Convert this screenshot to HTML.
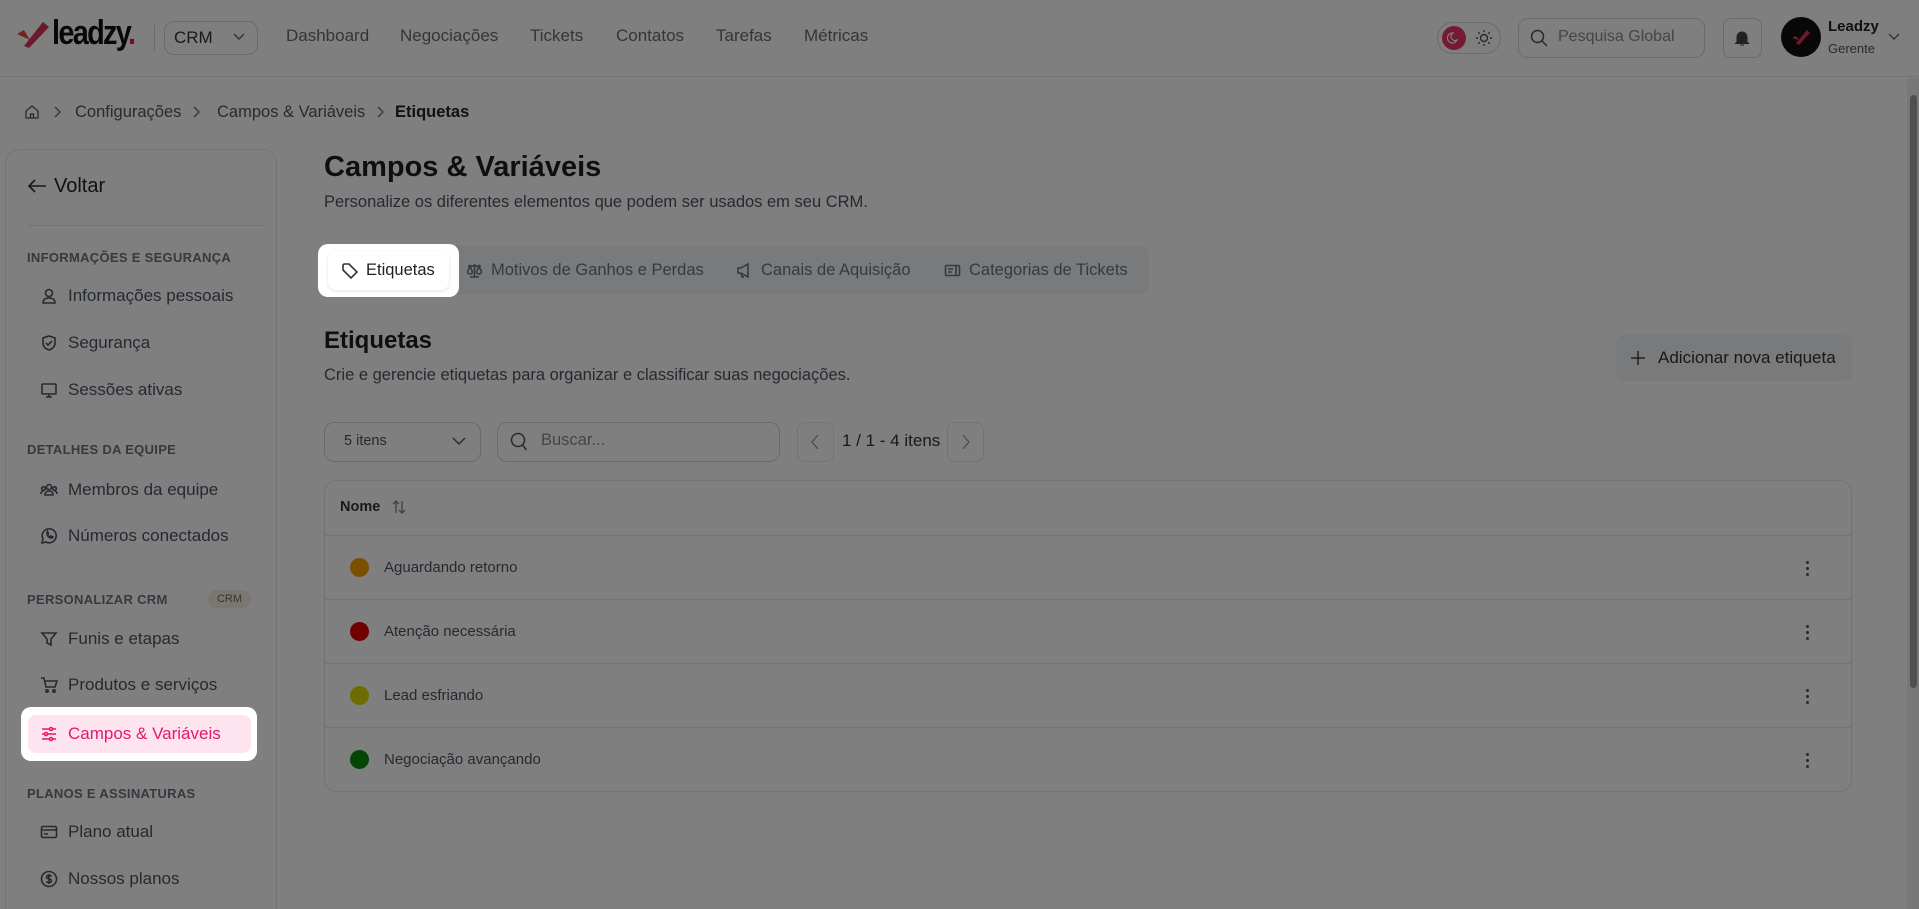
<!DOCTYPE html>
<html style="overflow:hidden;height:909px"><head><meta charset="utf-8"><style>
*{box-sizing:border-box;margin:0;padding:0}
body{width:1919px;height:909px;overflow:hidden;background:#fff;font-family:"Liberation Sans",sans-serif;color:#111;position:relative}
.abs{position:absolute}
.nav{top:26px;font-size:17px;color:#6b6b6b}
.sb-h{left:27px;font-size:13px;font-weight:bold;color:#6b7280;letter-spacing:.3px}
.sb-i{left:40px;font-size:17px;color:#4b5563;display:flex;align-items:center;gap:10px;height:24px}
.sb-i svg{width:18px;height:18px;stroke:#4b5563;fill:none;stroke-width:1.6}
.tab{top:261px;font-size:16.5px;color:#6b7280;display:flex;align-items:center;gap:8px}
.tab svg{width:17px;height:17px;stroke:#6b7280;fill:none;stroke-width:1.6}
.row{left:324px;width:1528px;height:64px;border-top:1px solid #e5e7eb}
.dot{position:absolute;left:350px;width:19px;height:19px;border-radius:50%}
.rt{position:absolute;left:384px;font-size:15px;color:#4b5563}
.keb{position:absolute;left:1806px;width:4px;font-size:0}
.keb i{display:block;width:3px;height:3px;border-radius:50%;background:#555;margin:0 0 3px}
#ov{position:absolute;left:0;top:0;width:1919px;height:909px;background:rgba(0,0,0,.5);z-index:5}
.spot{z-index:10}
</style></head><body>
<!-- header -->
<div class="abs" style="left:0;top:0;width:1919px;height:77px;border-bottom:1px solid #e5e7eb"></div>
<svg class="abs" style="left:15px;top:20px" width="36" height="28" viewBox="0 0 36 28"><path d="M2 14 L9 10 L15 20 Z" fill="#e04a3a"/><path d="M9 26 L28 2 L34 7 L14 28 Z" fill="#d9305a"/></svg>
<div class="abs" style="left:52px;top:14px;font-size:34px;font-weight:bold;letter-spacing:-2px;transform:scaleX(.85);transform-origin:left;color:#111">leadzy<span style="color:#e01e5a">.</span></div>
<div class="abs" style="left:154px;top:25px;width:1px;height:26px;background:#d1d5db"></div>
<div class="abs" style="left:164px;top:21px;width:94px;height:34px;border:1px solid #d1d5db;border-radius:10px"></div>
<div class="abs" style="left:174px;top:28px;font-size:17px;color:#333">CRM</div>
<svg class="abs" style="left:233px;top:32px" width="12" height="10" viewBox="0 0 12 10"><path d="M1 2 L6 7 L11 2" stroke="#666" fill="none" stroke-width="1.4"/></svg>
<div class="abs nav" style="left:286px">Dashboard</div>
<div class="abs nav" style="left:400px">Negociações</div>
<div class="abs nav" style="left:530px">Tickets</div>
<div class="abs nav" style="left:616px">Contatos</div>
<div class="abs nav" style="left:716px">Tarefas</div>
<div class="abs nav" style="left:804px">Métricas</div>
<div class="abs" style="left:1437px;top:22px;width:64px;height:32px;border:1px solid #d1d5db;border-radius:16px"></div>
<div class="abs" style="left:1442px;top:26px;width:24px;height:24px;border-radius:50%;background:#e8346a"></div>
<svg class="abs" style="left:1447px;top:31px" width="14" height="14" viewBox="0 0 14 14"><path d="M10 9 A5 5 0 1 1 6 2 A4 4 0 0 0 10 9Z" stroke="#fff" fill="none" stroke-width="1.2"/></svg>
<svg class="abs" style="left:1475px;top:29px" width="18" height="18" viewBox="0 0 18 18" stroke="#555" stroke-width="1.4" fill="none"><circle cx="9" cy="9" r="3.5"/><path d="M9 1v2M9 15v2M1 9h2M15 9h2M3.3 3.3l1.4 1.4M13.3 13.3l1.4 1.4M3.3 14.7l1.4-1.4M13.3 4.7l1.4-1.4"/></svg>
<div class="abs" style="left:1518px;top:18px;width:187px;height:40px;border:1px solid #d1d5db;border-radius:10px"></div>
<svg class="abs" style="left:1530px;top:29px" width="18" height="18" viewBox="0 0 18 18"><circle cx="7.5" cy="7.5" r="6" stroke="#555" fill="none" stroke-width="1.5"/><path d="M12 12l5 5" stroke="#555" stroke-width="1.5"/></svg>
<div class="abs" style="left:1558px;top:28px;font-size:16px;color:#8a8a8a">Pesquisa Global</div>
<div class="abs" style="left:1723px;top:18px;width:39px;height:40px;border:1px solid #d1d5db;border-radius:8px"></div>
<svg class="abs" style="left:1734px;top:29px" width="16" height="18" viewBox="0 0 16 18"><path d="M3 13V8a5 5 0 0 1 10 0v5l1.5 1.5h-13Z M6 16h4" fill="#444" stroke="#444"/></svg>
<div class="abs" style="left:1781px;top:17px;width:40px;height:40px;border-radius:50%;background:#111"></div>
<svg class="abs" style="left:1791px;top:29px" width="20" height="16" viewBox="0 0 20 16"><path d="M1 9l4-2 3 4z" fill="#e04a3a"/><path d="M5 14L16 1l3 3L8 16z" fill="#d9305a"/></svg>
<div class="abs" style="left:1828px;top:18px;font-size:15px;font-weight:bold;color:#222">Leadzy</div>
<div class="abs" style="left:1828px;top:41px;font-size:13px;color:#555">Gerente</div>
<svg class="abs" style="left:1888px;top:32px" width="12" height="10" viewBox="0 0 12 10"><path d="M1 2 L6 7 L11 2" stroke="#666" fill="none" stroke-width="1.4"/></svg>
<!-- scrollbar -->
<div class="abs" style="left:1907px;top:78px;width:12px;height:831px;background:#f1f1f1"></div>
<div class="abs" style="left:1910px;top:95px;width:7px;height:593px;background:#a0a0a0;border-radius:4px"></div>
<!-- breadcrumb -->
<svg class="abs" style="left:24px;top:104px" width="16" height="16" viewBox="0 0 16 16"><path d="M2 7L8 2l6 5v7H2Z M6.5 14v-4h3v4" stroke="#555" fill="none" stroke-width="1.3"/></svg>
<svg class="abs" style="left:53px;top:106px" width="8" height="12" viewBox="0 0 8 12"><path d="M2 1l5 5-5 5" stroke="#666" fill="none" stroke-width="1.3"/></svg>
<div class="abs" style="left:75px;top:103px;font-size:16.5px;color:#555">Configurações</div>
<svg class="abs" style="left:192px;top:106px" width="8" height="12" viewBox="0 0 8 12"><path d="M2 1l5 5-5 5" stroke="#666" fill="none" stroke-width="1.3"/></svg>
<div class="abs" style="left:217px;top:103px;font-size:16.5px;color:#555">Campos &amp; Variáveis</div>
<svg class="abs" style="left:376px;top:106px" width="8" height="12" viewBox="0 0 8 12"><path d="M2 1l5 5-5 5" stroke="#666" fill="none" stroke-width="1.3"/></svg>
<div class="abs" style="left:395px;top:103px;font-size:16.5px;color:#222;font-weight:bold">Etiquetas</div>
<!-- sidebar -->
<div class="abs" style="left:5px;top:149px;width:272px;height:760px;border:1px solid #e5e7eb;border-bottom:none;border-radius:14px 14px 0 0"></div>
<svg class="abs" style="left:27px;top:178px" width="20" height="16" viewBox="0 0 20 16"><path d="M19 8H2M8 2L2 8l6 6" stroke="#333" fill="none" stroke-width="1.6"/></svg>
<div class="abs" style="left:54px;top:175px;font-size:20px;color:#222">Voltar</div>
<div class="abs" style="left:27px;top:225px;width:237px;height:1px;background:#e5e7eb"></div>
<div class="abs sb-h" style="top:250px">INFORMAÇÕES E SEGURANÇA</div>
<div class="abs sb-i" style="top:284px"><svg viewBox="0 0 18 18"><circle cx="9" cy="6" r="3.5"/><path d="M3 16c0-4 3-5 6-5s6 1 6 5z"/></svg>Informações pessoais</div>
<div class="abs sb-i" style="top:331px"><svg viewBox="0 0 18 18"><path d="M9 2l6 2v5c0 4-3 6-6 7-3-1-6-3-6-7V4z"/><path d="M6 9l2 2 4-4"/></svg>Segurança</div>
<div class="abs sb-i" style="top:378px"><svg viewBox="0 0 18 18"><rect x="2" y="3" width="14" height="10" rx="1"/><path d="M6 16h6M9 13v3"/></svg>Sessões ativas</div>
<div class="abs sb-h" style="top:442px">DETALHES DA EQUIPE</div>
<div class="abs sb-i" style="top:478px"><svg viewBox="0 0 18 18"><circle cx="9" cy="6" r="2.5"/><circle cx="3.5" cy="7.5" r="1.8"/><circle cx="14.5" cy="7.5" r="1.8"/><path d="M5 14c0-3 2-4 4-4s4 1 4 4zM1 13c0-2 1-3 2.5-3M17 13c0-2-1-3-2.5-3"/></svg>Membros da equipe</div>
<div class="abs sb-i" style="top:524px"><svg viewBox="0 0 18 18"><path d="M2 16l1-4a7 7 0 1 1 3 3z"/><path d="M7 6c0 3 2 5 5 5l1-1-2-1-1 1c-1-.5-2-1.5-2.5-2.5l1-1-1-2z"/></svg>Números conectados</div>
<div class="abs sb-h" style="top:592px">PERSONALIZAR CRM</div>
<div class="abs" style="left:208px;top:590px;width:43px;height:18px;border-radius:9px;background:#f5ece0;font-size:11px;color:#6b6b6b;text-align:center;line-height:18px">CRM</div>
<div class="abs sb-i" style="top:627px"><svg viewBox="0 0 18 18"><path d="M2 3h14l-5 6v6l-4 -2V9z"/></svg>Funis e etapas</div>
<div class="abs sb-i" style="top:673px"><svg viewBox="0 0 18 18"><path d="M1 2h3l2 9h9l2-6H5"/><circle cx="7" cy="15" r="1.2"/><circle cx="14" cy="15" r="1.2"/></svg>Produtos e serviços</div>
<div class="abs sb-h" style="top:786px">PLANOS E ASSINATURAS</div>
<div class="abs sb-i" style="top:820px"><svg viewBox="0 0 18 18"><rect x="1.5" y="3.5" width="15" height="11" rx="1.5"/><path d="M1.5 7h15M4 11h4"/></svg>Plano atual</div>
<div class="abs sb-i" style="top:867px"><svg viewBox="0 0 18 18"><circle cx="9" cy="9" r="7.5"/><path d="M11.5 6.5c-.5-1-1.5-1.2-2.5-1.2-1.5 0-2.5.8-2.5 1.8 0 2.5 5 1.2 5 3.7 0 1-1 1.8-2.5 1.8-1 0-2-.3-2.5-1.2M9 4v10"/></svg>Nossos planos</div>
<!-- main -->
<div class="abs" style="left:324px;top:151px;font-size:29px;font-weight:bold;color:#1f1f1f">Campos &amp; Variáveis</div>
<div class="abs" style="left:324px;top:193px;font-size:16.5px;color:#4b5563">Personalize os diferentes elementos que podem ser usados em seu CRM.</div>
<div class="abs" style="left:319px;top:246px;width:830px;height:49px;background:#f3f4f6;border-radius:10px"></div>
<div class="abs tab" style="left:466px"><svg viewBox="0 0 17 17"><path d="M8.5 2v13M4 15h9M2 4h13M4 4l-2.5 6a2.5 2 0 0 0 5 0zM13 4l-2.5 6a2.5 2 0 0 0 5 0z"/></svg>Motivos de Ganhos e Perdas</div>
<div class="abs tab" style="left:736px"><svg viewBox="0 0 17 17"><path d="M2 7v4h3l7 4V2L5 6H2zM5 11l1 4h2"/></svg>Canais de Aquisição</div>
<div class="abs tab" style="left:944px"><svg viewBox="0 0 17 17"><rect x="1.5" y="3.5" width="14" height="10" rx="1"/><path d="M4 7h5M4 10h4M12 4v9"/></svg>Categorias de Tickets</div>
<div class="abs" style="left:324px;top:327px;font-size:24px;font-weight:bold;color:#1f1f1f">Etiquetas</div>
<div class="abs" style="left:324px;top:366px;font-size:16.5px;color:#4b5563">Crie e gerencie etiquetas para organizar e classificar suas negociações.</div>
<div class="abs" style="left:1616px;top:335px;width:236px;height:46px;background:#f3f4f6;border-radius:8px"></div>
<svg class="abs" style="left:1630px;top:350px" width="16" height="16" viewBox="0 0 16 16"><path d="M8 1v14M1 8h14" stroke="#444" stroke-width="1.5"/></svg>
<div class="abs" style="left:1658px;top:348px;font-size:17px;color:#333">Adicionar nova etiqueta</div>
<div class="abs" style="left:324px;top:422px;width:157px;height:40px;border:1px solid #d1d5db;border-radius:10px"></div>
<div class="abs" style="left:344px;top:433px;font-size:14.5px;color:#4b5563">5 itens</div>
<svg class="abs" style="left:452px;top:436px" width="14" height="10" viewBox="0 0 14 10"><path d="M1 2l6 6 6-6" stroke="#555" fill="none" stroke-width="1.4"/></svg>
<div class="abs" style="left:497px;top:422px;width:283px;height:40px;border:1px solid #d1d5db;border-radius:10px"></div>
<svg class="abs" style="left:510px;top:432px" width="18" height="20" viewBox="0 0 18 20"><circle cx="8" cy="8" r="6.5" stroke="#555" fill="none" stroke-width="1.5"/><path d="M12.5 13l4 5" stroke="#555" stroke-width="1.5"/></svg>
<div class="abs" style="left:541px;top:431px;font-size:16.5px;color:#8a8a8a">Buscar...</div>
<div class="abs" style="left:797px;top:422px;width:37px;height:40px;border:1px solid #e5e7eb;border-radius:8px"></div>
<svg class="abs" style="left:810px;top:434px" width="10" height="16" viewBox="0 0 10 16"><path d="M8 1L2 8l6 7" stroke="#999" fill="none" stroke-width="1.3"/></svg>
<div class="abs" style="left:842px;top:431px;font-size:17px;color:#333">1 / 1 - 4 itens</div>
<div class="abs" style="left:947px;top:422px;width:37px;height:40px;border:1px solid #e5e7eb;border-radius:8px"></div>
<svg class="abs" style="left:961px;top:434px" width="10" height="16" viewBox="0 0 10 16"><path d="M2 1l6 7-6 7" stroke="#999" fill="none" stroke-width="1.3"/></svg>
<!-- table -->
<div class="abs" style="left:324px;top:480px;width:1528px;height:312px;border:1px solid #e5e7eb;border-radius:12px"></div>
<div class="abs" style="left:340px;top:499px;font-size:14.5px;font-weight:bold;color:#333">Nome</div>
<svg class="abs" style="left:392px;top:499px" width="14" height="16" viewBox="0 0 14 16"><path d="M4 14V2M1 5l3-3 3 3M10 2v12M7 11l3 3 3-3" stroke="#777" fill="none" stroke-width="1.2"/></svg>
<div class="abs row" style="top:535px"></div>
<div class="abs row" style="top:599px"></div>
<div class="abs row" style="top:663px"></div>
<div class="abs row" style="top:727px"></div>
<div class="dot" style="top:558px;background:#f0a000"></div><div class="rt" style="top:559px">Aguardando retorno</div>
<div class="dot" style="top:622px;background:#e00000"></div><div class="rt" style="top:623px">Atenção necessária</div>
<div class="dot" style="top:686px;background:#d8d800"></div><div class="rt" style="top:687px">Lead esfriando</div>
<div class="dot" style="top:750px;background:#0a8a0a"></div><div class="rt" style="top:751px">Negociação avançando</div>
<div class="keb" style="top:561px"><i></i><i></i><i></i></div>
<div class="keb" style="top:625px"><i></i><i></i><i></i></div>
<div class="keb" style="top:689px"><i></i><i></i><i></i></div>
<div class="keb" style="top:753px"><i></i><i></i><i></i></div>
<div id="ov"></div>
<!-- spotlights -->
<div class="abs spot" style="left:318px;top:244px;width:141px;height:53px;background:#fff;border-radius:10px"></div>
<div class="abs spot" style="left:328px;top:251px;width:121px;height:39px;background:#fff;border-radius:8px;box-shadow:0 1px 3px rgba(0,0,0,.12)"></div>
<div class="abs tab spot" style="left:341px;color:#222"><svg viewBox="0 0 17 17" style="stroke:#333"><path d="M2 3v5l8 8 6-6-8-8H3zM5.5 5.5h.1"/></svg>Etiquetas</div>
<div class="abs spot" style="left:21px;top:707px;width:236px;height:54px;background:#fff;border-radius:10px"></div>
<div class="abs spot" style="left:28px;top:715px;width:223px;height:38px;background:#fde4ee;border-radius:8px"></div>
<div class="abs sb-i spot" style="top:722px;color:#e5176f"><svg viewBox="0 0 18 18" style="stroke:#e5176f"><path d="M2 4h14M2 9h14M2 14h14"/><circle cx="11" cy="4" r="1.5" fill="#fde4ee"/><circle cx="6" cy="9" r="1.5" fill="#fde4ee"/><circle cx="11" cy="14" r="1.5" fill="#fde4ee"/></svg>Campos &amp; Variáveis</div>
</body></html>
